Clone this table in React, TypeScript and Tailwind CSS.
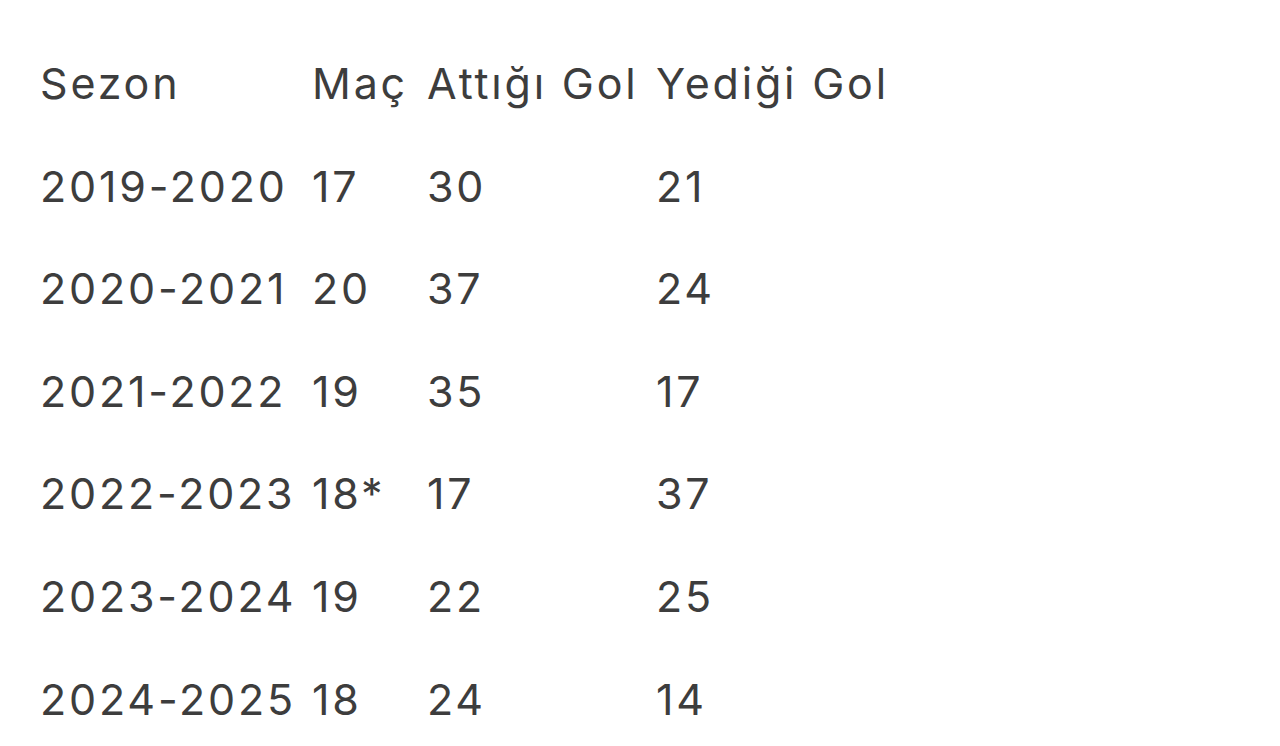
import React from "react";

const rows = [
  ["2019-2020", "17", "30", "21"],
  ["2020-2021", "20", "37", "24"],
  ["2021-2022", "19", "35", "17"],
  ["2022-2023", "18*", "17", "37"],
  ["2023-2024", "19", "22", "25"],
  ["2024-2025", "18", "24", "14"],
];

export default function App() {
  return (
    <div className="w-[1280px] h-[746px] bg-white overflow-hidden pl-[40px] pt-[32px] text-[#3d3d3d]" style={{ fontFamily: "Inter, 'Noto Sans', sans-serif" }}>
      <div className="grid grid-cols-[272px_115px_229px_300px] text-[43px] leading-[102.6px] tracking-[2.8px]">
        <div>Sezon</div>
        <div>Maç</div>
        <div className="whitespace-nowrap">Attığı Gol</div>
        <div className="whitespace-nowrap">Yediği Gol</div>
        {rows.map((r) => (
          <React.Fragment key={r[0]}>
            <div className="whitespace-nowrap">{r[0]}</div>
            <div>{r[1]}</div>
            <div>{r[2]}</div>
            <div>{r[3]}</div>
          </React.Fragment>
        ))}
      </div>
    </div>
  );
}
